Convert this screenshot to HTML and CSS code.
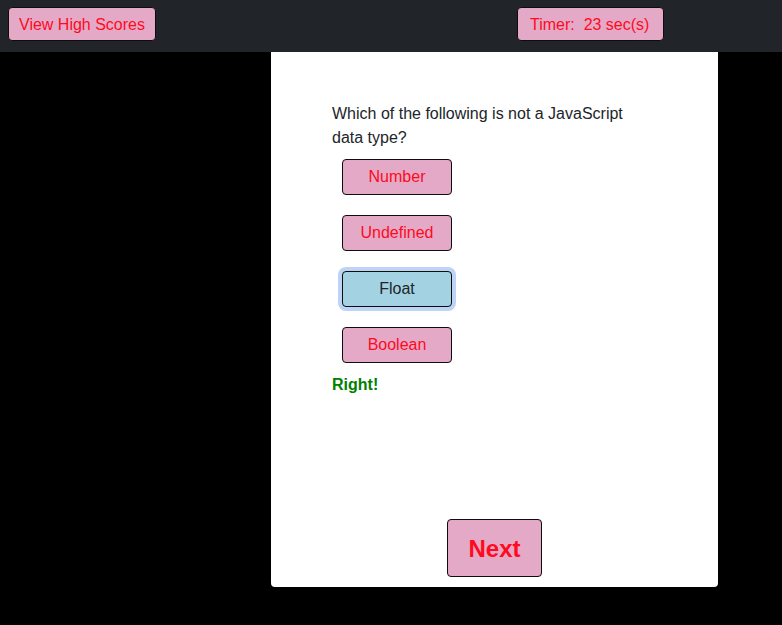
FILE: index.html
```html
<!DOCTYPE html>
<html lang="en">
<head>
<meta charset="utf-8">
<title>Quiz</title>
<link rel="stylesheet" href="styles.css">
</head>
<body>
<header class="navbar">
  <button class="btn nav-btn">View High Scores</button>
  <button class="btn nav-btn timer">Timer:&nbsp; 23 sec(s)</button>
</header>
<main class="card">
  <div class="card-body">
    <p class="question">Which of the following is not a JavaScript data type?</p>
    <div class="answers">
      <button class="btn answer">Number</button>
      <button class="btn answer">Undefined</button>
      <button class="btn answer selected">Float</button>
      <button class="btn answer">Boolean</button>
    </div>
    <p class="feedback">Right!</p>
  </div>
  <button class="btn next">Next</button>
</main>
</body>
</html>
```
FILE: styles.css
```css
* { box-sizing: border-box; }
html, body { margin: 0; padding: 0; }
body {
  background: #000;
  font-family: "Liberation Sans", Arial, sans-serif;
  font-size: 16px;
  line-height: 24px;
  color: #212529;
  height: 625px;
  overflow: hidden;
}
.navbar {
  background: #212529;
  height: 52px;
  padding: 7px 8px;
  display: grid;
  grid-template-columns: 509px auto;
  align-items: start;
}
.navbar .nav-btn { justify-self: start; }
.btn {
  font-family: inherit;
  font-size: 16px;
  line-height: 24px;
  background: #e3a9c6;
  color: #ff0a1e;
  border: 1px solid #0d0d0d;
  border-radius: 4px;
  margin: 0;
  cursor: pointer;
}
.nav-btn {
  height: 34px;
  padding: 5px 10px 3px;
}
.nav-btn.timer {
  padding: 5px 14px 3px 12px;
}
.card {
  margin-left: 271px;
  width: 447px;
  height: 535px;
  background: #fff;
  border-radius: 0 0 4px 4px;
  display: flex;
  flex-direction: column;
  align-items: center;
}
.card-body {
  align-self: stretch;
  padding: 50px 61px 0 61px;
}
.question {
  margin: 0;
}
.answers {
  display: flex;
  flex-direction: column;
  align-items: flex-start;
  gap: 20px;
  margin-top: 9px;
  padding-left: 10px;
}
.answer {
  width: 110px;
  padding: 5px 0;
  text-align: center;
}
.answer.selected {
  background: #a3d3e2;
  color: #212529;
  box-shadow: 0 0 0 4px #bdd4f6;
}
.feedback {
  margin: 10px 0 0 0;
  color: #008000;
  font-weight: bold;
}
.next {
  margin-top: auto;
  margin-bottom: 10px;
  padding: 11px 20px 9px;
  font-size: 24px;
  line-height: 36px;
  font-weight: bold;
}
```
